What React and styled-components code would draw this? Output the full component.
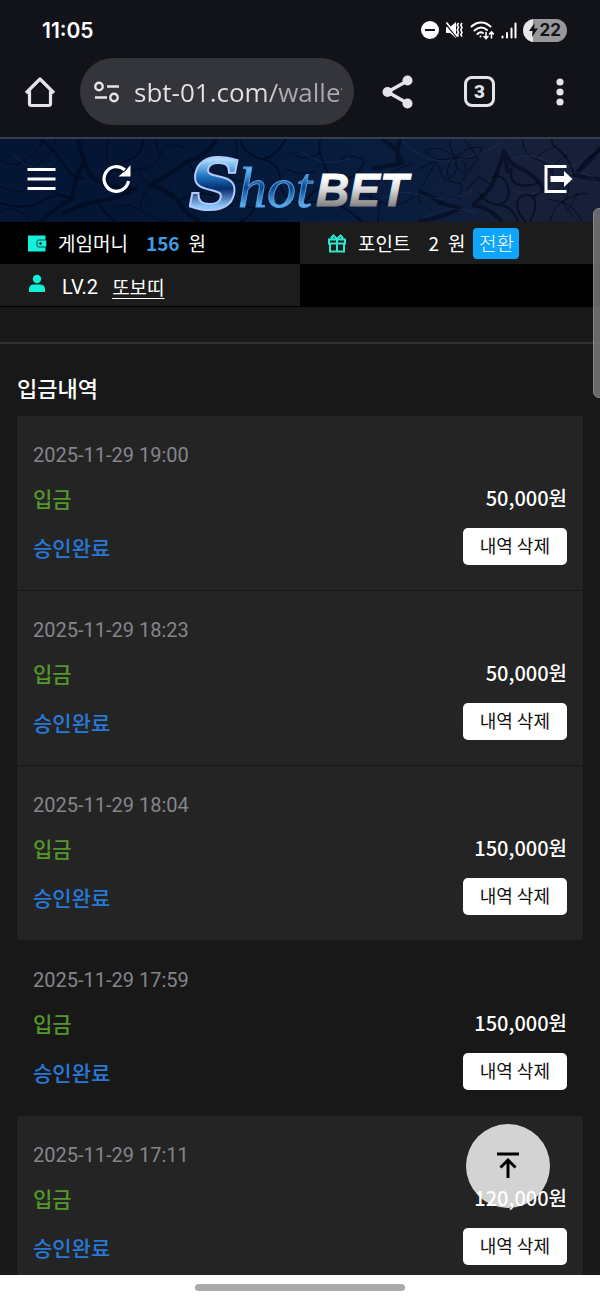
import React from 'react';
import styled, { createGlobalStyle } from 'styled-components';

const GlobalStyle = createGlobalStyle`
    * {
        box-sizing: border-box;
    }
    body {
        margin: 0;
        background: #181818;
        font-family: Roboto, 'Noto Sans CJK KR', sans-serif;
        color: #fff;
    }
    button {
        border: none;
        padding: 0;
        background: none;
        color: inherit;
        cursor: pointer;
    }
    svg {
        display: block;
    }
`
const Screen = styled.div`
    position: relative;
    display: flex;
    flex-direction: column;
    height: 100vh;
    overflow: hidden;
`
const StatusBar = styled.div`
    display: flex;
    flex-shrink: 0;
    align-items: center;
    justify-content: space-between;
    height: 58px;
    padding: 2px 33px 0 42px;
    background: #121319;
`
const Clock = styled.span`
    font-family: Inter, sans-serif;
    font-size: 21px;
    font-weight: 600;
`
const StatusIcons = styled.div`
    display: flex;
    align-items: center;
    gap: 6px;
`
const Battery = styled.span`
    display: flex;
    align-items: center;
    justify-content: flex-end;
    gap: 2px;
    width: 44px;
    height: 23px;
    padding-right: 6px;
    border-radius: 12px;
    background: linear-gradient(90deg, #e6e6e8 22%, #98989b 22%);
    color: #121319;
    font-family: Inter, sans-serif;
    font-size: 17px;
    font-weight: 700;
`
const BrowserBar = styled.div`
    display: flex;
    flex-shrink: 0;
    align-items: center;
    height: 81px;
    padding: 0 24px 12px;
    border-bottom: 2px solid #343f4c;
    background: #121319;
    color: #e3e3e9;
`
const AddressBox = styled.label`
    display: flex;
    flex: 1;
    align-items: center;
    gap: 14px;
    min-width: 0;
    height: 67px;
    margin: 0 28px 0 24px;
    padding: 0 12px 0 14px;
    border-radius: 34px;
    background: #34353a;
`
const AddressInput = styled.input`
    flex: 1;
    width: 0;
    min-width: 0;
    padding: 0;
    border: none;
    outline: none;
    background: linear-gradient(90deg, #e3e3e9 62%, #a9a9b0 72%);
    background-clip: text;
    color: transparent;
    font-family: 'Open Sans', sans-serif;
    font-size: 26px;
`
const BrowserActions = styled.div`
    display: flex;
    align-items: center;
    gap: 50px;
`
const TabsButton = styled.button`
    width: 31px;
    height: 31px;
    border: 3px solid #e3e3e9;
    border-radius: 8px;
    font-family: Roboto, sans-serif;
    font-size: 19px;
    font-weight: 800;
    line-height: 24px;
`
const MoreButton = styled.button`
    margin-left: 61px;
    margin-right: 12px;
`
const SiteHeader = styled.header`
    position: relative;
    display: flex;
    flex-shrink: 0;
    align-items: center;
    justify-content: space-between;
    height: 83px;
    padding: 0 27px;
    background: linear-gradient(95deg, #041535 0%, #041634 25%, #061b3d 50%, #0b1d3d 70%, #182039 90%);
`
const HeaderBackdrop = styled.svg`
    position: absolute;
    top: 0;
    left: 0;
    width: 100%;
    height: 100%;
`
const HeaderButtons = styled.div`
    position: relative;
    display: flex;
    align-items: center;
    gap: 46px;
    padding-bottom: 3px;
`
const LogoLink = styled.a`
    position: relative;
    margin-left: 32px;
    margin-right: 106px;
`
const InfoGrid = styled.div`
    display: grid;
    flex-shrink: 0;
    grid-template-columns: 1fr 1fr;
    grid-auto-rows: 42px;
    background: #000;
`
const InfoCell = styled.div`
    display: flex;
    align-items: center;
    padding: 0 27px;
    background: ${({ $dark }) => ($dark ? '#000' : '#1c1c1c')};
    font-family: 'Noto Sans CJK KR', sans-serif;
    font-size: 19px;
    line-height: 30px;
`
const InfoLabel = styled.span`
    margin-left: 11px;
    margin-right: 18px;
`
const InfoAmount = styled.span`
    margin-right: 9px;
    color: ${({ $blue }) => ($blue ? '#3f9ce0' : '#fff')};
    font-weight: ${({ $blue }) => ($blue ? 700 : 400)};
`
const Level = styled.span`
    margin: 4px 14px 0 15px;
    font-family: Roboto, sans-serif;
    font-size: 20px;
`
const UserLink = styled.a`
    margin-top: 4px;
    color: #fff;
    text-decoration: underline;
    text-underline-offset: 3px;
`
const ConvertButton = styled.button`
    width: 46px;
    height: 31px;
    margin-left: 8px;
    border-radius: 4px;
    background: #0ea5ff;
    font-family: inherit;
    font-size: 19px;
    font-weight: 300;
    line-height: 30px;
`
const Content = styled.main`
    flex: 1;
    min-height: 0;
    overflow: hidden;
    background: #181818;
`
const Spacer = styled.div`
    height: 38px;
    border-top: 1px solid #000;
    border-bottom: 2px solid #303030;
`
const Title = styled.h1`
    margin: 0;
    padding: 27px 17px 13px;
    font-family: 'Noto Sans CJK KR', sans-serif;
    font-size: 22px;
    font-weight: 500;
    line-height: 32px;
`
const List = styled.ul`
    display: flex;
    flex-direction: column;
    gap: 1px;
    margin: 0;
    padding: 0 17px;
    list-style: none;
`
const Item = styled.li`
    display: flex;
    flex-direction: column;
    gap: 15px;
    padding: 26px 16px 25px;
    background: ${({ $plain }) => ($plain ? 'transparent' : '#242424')};
    font-family: 'Noto Sans CJK KR', sans-serif;
    font-size: 20px;
    line-height: 30px;
`
const Row = styled.div`
    display: flex;
    align-items: center;
    justify-content: space-between;
`
const DateText = styled.time`
    color: #85858c;
    font-family: Roboto, sans-serif;
    line-height: 26px;
`
const Kind = styled.span`
    color: #55982a;
    font-size: 21px;
    font-weight: 500;
`
const State = styled.span`
    color: #2878d8;
    font-size: 21px;
    font-weight: 500;
`
const Amount = styled.span`
    position: relative;
    z-index: 2;
    font-weight: 500;
`
const DeleteButton = styled.button`
    position: relative;
    z-index: 2;
    height: 37px;
    padding: 0 17px 4px;
    border-radius: 5px;
    background: #fff;
    color: #111;
    font-family: inherit;
    font-size: 18px;
`
const TopButton = styled.button`
    position: absolute;
    right: 50px;
    bottom: 92px;
    z-index: 1;
    display: flex;
    align-items: center;
    justify-content: center;
    width: 84px;
    height: 84px;
    border-radius: 50%;
    background: #d3d3d3;
`
const ScrollThumb = styled.div`
    position: absolute;
    top: 208px;
    right: -6px;
    z-index: 3;
    width: 13px;
    height: 190px;
    border: 1px solid #858585;
    border-radius: 6px;
    background: rgba(125, 125, 125, 0.8);
`
const NavBar = styled.footer`
    display: flex;
    flex-shrink: 0;
    align-items: center;
    justify-content: center;
    height: 25px;
    background: #fff;
`
const NavHandle = styled.div`
    width: 35%;
    height: 7px;
    border-radius: 4px;
    background: #aaa;
`

const MinusIcon = () => (
    <svg width="18" height="18" viewBox="0 0 18 18">
        <circle cx="9" cy="9" r="9" fill="#fff" />
        <path d="M4 9h10" stroke="#121319" strokeWidth="2" />
    </svg>
)

const MuteIcon = () => (
    <svg width="19" height="18" viewBox="0 0 19 18" fill="none" stroke="#fff">
        <path d="M1 6h4l6-5v16l-6-5H1z" fill="#fff" stroke="none" />
        <path d="M1 3.500l11 13" stroke="#121319" strokeWidth="1.400" />
        <path d="M1.500 1.500l11 14" strokeWidth="1.800" />
        <path d="M13.500 2l-1.200 2 1.200 2.500-1.200 2.500 1.200 2.500-1.200 2 1.200 2M17 2l-1.200 2 1.200 2.500-1.200 2.500 1.200 2.500-1.200 2 1.200 2" strokeWidth="1.600" />
    </svg>
)

const WifiIcon = () => (
    <svg width="25" height="19" viewBox="0 0 25 19" fill="none" stroke="#fff" strokeWidth="2" strokeLinecap="round">
        <path d="M1.500 5.500C7 0 15 0 20.500 5.500" />
        <path d="M4.500 9.500C8.500 5.500 13.500 5.500 17 9" />
        <path d="M7.500 13C9.500 11 11.500 11 13 12" />
        <circle cx="10.500" cy="15.500" r="1" fill="#fff" stroke="none" />
        <path d="M16 11.500v6M14 15.500l2 2 2-2M21.500 17v-6M19.500 13l2-2 2 2" strokeWidth="1.600" />
    </svg>
)

const SignalIcon = () => (
    <svg width="16" height="17" viewBox="0 0 16 17" stroke="#fff" strokeWidth="2" strokeLinecap="round">
        <path d="M1.500 14.500v1M6 11v4.500M10.500 6.500v9M14.500 1.500v14" />
    </svg>
)

const BoltIcon = () => (
    <svg width="9" height="14" viewBox="0 0 9 14">
        <path d="M5.500 0L0 8h3.500L3 14l6-8.500H5.200z" fill="#121319" />
    </svg>
)

const HomeIcon = () => (
    <svg width="32" height="32" viewBox="0 0 32 32" fill="none" stroke="#e3e3e9" strokeWidth="3.200" strokeLinejoin="round">
        <path d="M2 17L16 3l14 14" />
        <path d="M5.500 14.500v13q0 2 2 2h17q2 0 2-2v-13" />
    </svg>
)

const TuneIcon = () => (
    <svg width="26" height="22" viewBox="0 0 26 22" fill="none" stroke="#e3e3e9" strokeWidth="2.400">
        <circle cx="5" cy="5.500" r="3.700" />
        <path d="M13 5.500h12M1 16.500h12" />
        <circle cx="20" cy="16.500" r="3.700" />
    </svg>
)

const ShareIcon = () => (
    <svg width="32" height="34" viewBox="0 0 32 34">
        <path d="M26 5.500L5.500 17 26 28.500" fill="none" stroke="#e3e3e9" strokeWidth="3.400" />
        <g fill="#e3e3e9">
            <circle cx="25.500" cy="5.500" r="5" />
            <circle cx="5.500" cy="17" r="5" />
            <circle cx="25.500" cy="28.500" r="5" />
        </g>
    </svg>
)

const MoreIcon = () => (
    <svg width="8" height="28" viewBox="0 0 8 28" fill="#e3e3e9">
        <circle cx="4" cy="4" r="3.600" />
        <circle cx="4" cy="14" r="3.600" />
        <circle cx="4" cy="24" r="3.600" />
    </svg>
)

const MenuIcon = () => (
    <svg width="29" height="24" viewBox="0 0 29 24" stroke="#fff" strokeWidth="3">
        <path d="M0.500 2.500h28M0.500 12h28M0.500 21.500h28" />
    </svg>
)

const RefreshIcon = () => (
    <svg width="30" height="30" viewBox="0 0 30 30">
        <path d="M22.800 6A12.300 12.300 0 1 0 26.500 17" fill="none" stroke="#fff" strokeWidth="3.200" />
        <path d="M28.500 1v11.500H16.500l4.500-4 2-1z" fill="#fff" />
    </svg>
)

const LogoutIcon = () => (
    <svg width="29" height="30" viewBox="0 0 29 30">
        <path d="M22.500 2.500H2v25h20.500" fill="none" stroke="#fff" strokeWidth="3" />
        <path d="M6.500 12H20V7l8.500 8-8.500 8v-5H6.500z" fill="#fff" />
    </svg>
)

const WalletIcon = () => (
    <svg width="20" height="17" viewBox="0 0 20 17">
        <path d="M1 0.500h17.500v16H1z" fill="#14f0dc" />
        <path d="M11.500 5h8v7h-8q-1.500 0-1.500-1.500v-4Q10 5 11.500 5z" fill="#14f0dc" stroke="#03514b" />
        <circle cx="13.500" cy="8.500" r="1.200" fill="#000" />
    </svg>
)

const GiftIcon = () => (
    <svg width="20" height="19" viewBox="0 0 20 19" fill="none" stroke="#2ee6cd" strokeWidth="2">
        <path d="M2 5.500h16v4H2zM3 9.500h14v8H3zM10 5v12.500M10 5L6.500 1.500 4.500 3.500 6 5M10 5l3.500-3.500 2 2L14 5" />
    </svg>
)

const UserIcon = () => (
    <svg width="20" height="22" viewBox="0 0 20 22" fill="#0ff0d8">
        <circle cx="10" cy="5" r="4.200" />
        <path d="M2 18v-2.500Q2 10.500 7 10.500h6q5 0 5 5V18z" />
    </svg>
)

const TopIcon = () => (
    <svg width="24" height="30" viewBox="0 0 24 30" fill="none" stroke="#000" strokeWidth="3">
        <path d="M1 3h22M12 27V10M4.500 16.500L12 9l7.500 7.500" />
    </svg>
)

const Logo = () => (
    <svg width="224" height="83" viewBox="0 0 224 83" role="img" aria-label="ShotBET">
        <defs>
            <linearGradient id="ice" x1="0" y1="0" x2="0" y2="1">
                <stop offset="0.200" stopColor="#a9dcff" />
                <stop offset="0.400" stopColor="#1d77c4" />
                <stop offset="0.560" stopColor="#072c6c" />
                <stop offset="0.780" stopColor="#8cc6fa" />
            </linearGradient>
            <linearGradient id="water" x1="0" y1="0" x2="0" y2="1">
                <stop offset="0.250" stopColor="#5cb2f5" />
                <stop offset="0.500" stopColor="#0d4287" />
                <stop offset="0.780" stopColor="#5db0f2" />
            </linearGradient>
            <linearGradient id="steel" x1="0" y1="0" x2="0" y2="1">
                <stop offset="0.250" stopColor="#ffffff" />
                <stop offset="0.480" stopColor="#dcdcdc" />
                <stop offset="0.800" stopColor="#858585" />
            </linearGradient>
        </defs>
        <text x="1" y="69" fontFamily="DejaVu Serif, serif" fontStyle="italic" fontSize="68" fontWeight="700" fill="url(#ice)" stroke="#b4c8fa" strokeWidth="4" paintOrder="stroke">S</text>
        <text x="49" y="68" fontFamily="Liberation Serif, serif" fontStyle="italic" fontSize="58" fill="url(#water)" stroke="#4f9bdf" strokeWidth="1">hot</text>
        <text x="127" y="67" fontFamily="Liberation Sans, sans-serif" fontSize="46" fontWeight="700" fontStyle="italic" fill="url(#steel)" stroke="url(#steel)" strokeWidth="1">BET</text>
    </svg>
)

const Backdrop = () => (
    <HeaderBackdrop viewBox="0 0 600 83" preserveAspectRatio="xMidYMid slice" fill="none" stroke="#020719" aria-hidden="true">
        <g strokeWidth="4" opacity="0.550" strokeLinejoin="round">
            <path d="M40 83Q58 66 72 60Q74 40 84 22Q88 40 106 46L136 50Q116 60 98 62Q76 66 62 76M84 22L78 0M150 46Q170 36 188 22Q206 18 216 0M150 46Q168 50 178 62Q184 74 200 83" />
            <path d="M382 0q16 8 20 24l-30 6M402 24q-8-4-2-24M420 53Q434 58 440 64L460 69Q444 78 418 83" />
            <path d="M472 66Q486 56 492 46Q500 28 504 12Q510 26 522 30Q538 38 544 52M472 66Q490 68 502 83M600 8Q592 22 574 36Q590 40 600 40M504 12l4 22" />
        </g>
        <g strokeWidth="2" opacity="0.600">
            <path d="M492 38q12-4 16 10t-10 18q-16-4-18-12M512 28q-4 16 8 18t20-4M498 66q14 0 20 17M520 58q10-6 14 2t-4 23M520 58q-8 10 6 25M544 52q-12 4-10 8M574 36q-4-16-14-24t-8-12M578 32q8-14 22-20" />
            <path d="M72 60q-16-8-30 2t-42 2M84 40q-14-2-20-14T40 0M98 62q4 12 18 21M106 46q4-20 20-24t18-22M188 22q6 16 24 22t20 24M178 62q18-10 34-6M240 0q4 16 22 20t18 22 24 24M262 20q14-2 24-20M280 42q-14 8-22 22t-18 19M304 66q18-8 34 0t24 17M304 66q8-18 30-22t30-20M320 0q-4 16 14 44" />
        </g>
        <g strokeWidth="1" opacity="0.700">
            <path d="M455 18q-18-14-30-6q12 14 30 6q-8-14-4-18M455 18q18-14 28-8-8 14-28 8q-12 12-6 22q12-8 6-22q14 6 10 16-12-4-10-16M418 30l18-8 8 18 16 5 18-26-14-19M436 22l-12 22M460 45q4 4 0 10M424 44q-8 8-4 20" />
            <path d="M0 20q12 10 24 2t20-22M24 22q10 12 6 24T0 48M30 46q14-4 22 6l20 8M56 0q-4 16-14 22t-12 24M110 0q-8 14 0 26t28 4M138 30q16 2 22-14t26-6M160 16l-6-16M138 30q4 12 12 16M112 70q14-8 26 0t28 13M140 70q2-14 10-24M0 72q18-8 30 11" />
            <path d="M206 20q14 0 22 14t24 4M228 34q12-10 8-34M212 56q16-6 26 6t26 2M292 14q14 10 28 0M286 30q16 8 30 2M340 20q14-8 26 4M350 60q16-8 30 2t34-4M370 60q2-14 14-22t30-14M380 62l-2 21M440 64q14-10 20-4M466 52l12-14 14 8" />
            <path d="M522 0q2 16 14 20t16 14 22 2M536 20q8-10 20-12M552 34q2-12 16-18M550 83q4-16 12-20t6-20M562 63q14 4 20 20M562 63q14-10 26-8M568 70l10-16M548 60l14 3 12 16" />
        </g>
        <g stroke="#395079" strokeWidth="1" opacity="0.250">
            <path d="M402 2q24 24 50 20t52-20M370 70q22-24 50-14t52-4M510 50q28 12 50-8t40 6M300 12q22 18 50 8M12 14q20 24 44 8M510 20q20-8 42 4t40-14M426 78q26-14 50-4" />
        </g>
    </HeaderBackdrop>
)

const deposits = [
    { date: '2025-11-29 19:00', amount: '50,000' },
    { date: '2025-11-29 18:23', amount: '50,000' },
    { date: '2025-11-29 18:04', amount: '150,000' },
    { date: '2025-11-29 17:59', amount: '150,000', plain: true },
    { date: '2025-11-29 17:11', amount: '120,000' },
]

const DepositItem = ({ deposit }) => {
    return (
        <Item $plain={deposit.plain}>
            <DateText>{deposit.date}</DateText>
            <Row>
                <Kind>입금</Kind>
                <Amount>{`${deposit.amount}원`}</Amount>
            </Row>
            <Row>
                <State>승인완료</State>
                <DeleteButton type="button">내역 삭제</DeleteButton>
            </Row>
        </Item>
    );
}

const App = () => {
    return (
        <Screen>
            <GlobalStyle />
            <StatusBar>
                <Clock>11:05</Clock>
                <StatusIcons>
                    <MinusIcon />
                    <MuteIcon />
                    <WifiIcon />
                    <SignalIcon />
                    <Battery><BoltIcon />22</Battery>
                </StatusIcons>
            </StatusBar>
            <BrowserBar>
                <button type="button" aria-label="Home"><HomeIcon /></button>
                <AddressBox>
                    <TuneIcon />
                    <AddressInput aria-label="Address" defaultValue="sbt-01.com/wallet" />
                </AddressBox>
                <BrowserActions>
                    <button type="button" aria-label="Share"><ShareIcon /></button>
                    <TabsButton type="button">3</TabsButton>
                </BrowserActions>
                <MoreButton type="button" aria-label="More"><MoreIcon /></MoreButton>
            </BrowserBar>
            <SiteHeader>
                <Backdrop />
                <HeaderButtons>
                    <button type="button" aria-label="Menu"><MenuIcon /></button>
                    <button type="button" aria-label="Refresh"><RefreshIcon /></button>
                </HeaderButtons>
                <LogoLink href="#"><Logo /></LogoLink>
                <HeaderButtons>
                    <button type="button" aria-label="Logout"><LogoutIcon /></button>
                </HeaderButtons>
            </SiteHeader>
            <InfoGrid>
                <InfoCell $dark>
                    <WalletIcon />
                    <InfoLabel>게임머니</InfoLabel>
                    <InfoAmount $blue>156</InfoAmount>
                    <span>원</span>
                </InfoCell>
                <InfoCell>
                    <GiftIcon />
                    <InfoLabel>포인트</InfoLabel>
                    <InfoAmount>2</InfoAmount>
                    <span>원</span>
                    <ConvertButton type="button">전환</ConvertButton>
                </InfoCell>
                <InfoCell>
                    <UserIcon />
                    <Level>LV.2</Level>
                    <UserLink href="#">또보띠</UserLink>
                </InfoCell>
            </InfoGrid>
            <Content>
                <Spacer />
                <Title>입금내역</Title>
                <List>
                    {deposits.map((deposit) => (
                        <DepositItem key={deposit.date} deposit={deposit} />
                    ))}
                </List>
            </Content>
            <TopButton type="button" aria-label="Top"><TopIcon /></TopButton>
            <ScrollThumb />
            <NavBar>
                <NavHandle />
            </NavBar>
        </Screen>
    );
}

export default App;
